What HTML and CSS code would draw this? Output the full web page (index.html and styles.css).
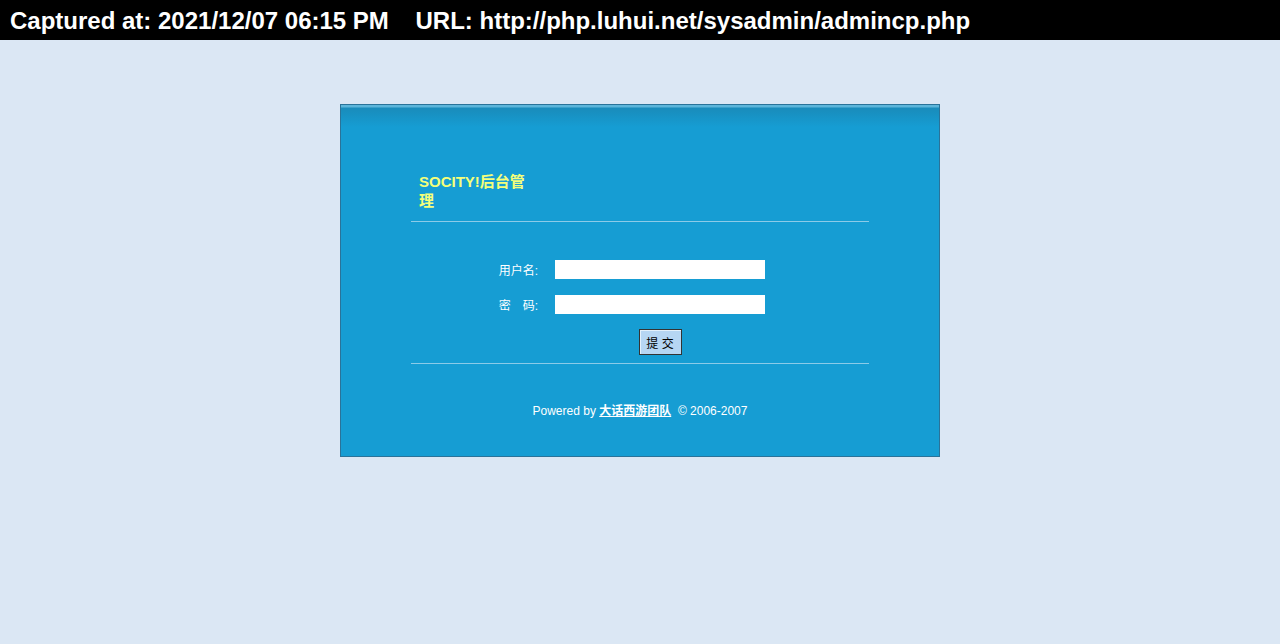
FILE: index.html
```html
<!DOCTYPE html>
<html>
<head>
<meta charset="utf-8">
<title>SOCITY!后台管理</title>
<link rel="stylesheet" href="styles.css">
</head>
<body>
<div class="capbar">Captured at: 2021/12/07 06:15 PM&nbsp;&nbsp;&nbsp;&nbsp;URL: http://php.luhui.net/sysadmin/admincp.php</div>
<div class="box">
  <div class="box-top"></div>
  <div class="inner">
    <div class="title">SOCITY!后台管理</div>
    <div class="rule"></div>
    <form class="form">
      <label class="lbl">用户名:</label>
      <input class="field" type="text">
      <label class="lbl">密　码:</label>
      <input class="field" type="password">
      <span></span>
      <div class="btnwrap"><button class="btn" type="button">提 交</button></div>
    </form>
    <div class="rule rule2"></div>
    <div class="footer">Powered by <a href="#" class="team">大话西游团队</a>&nbsp;&nbsp;© 2006-2007</div>
  </div>
</div>
</body>
</html>
```
FILE: styles.css
```css
html, body {
  margin: 0;
  padding: 0;
  background: #dbe7f4;
  font-family: "Liberation Sans", Arial, "Noto Sans CJK SC", sans-serif;
}
.capbar {
  height: 40px;
  background: #000;
  color: #fff;
  font-size: 24px;
  font-weight: bold;
  line-height: 42px;
  padding-left: 10px;
  white-space: nowrap;
}
.box {
  width: 598px;
  height: 351px;
  margin: 64px auto 0;
  border: 1px solid #2a7399;
  background: #169dd3;
  display: flex;
  flex-direction: column;
}
.box-top {
  height: 22px;
  flex: none;
  background: linear-gradient(#5cb5da 0, #5cb5da 2px, #1a8cbb 3px, #1890c1 8px, #169dd3 22px);
}
.inner {
  width: 458px;
  margin: 0 auto;
  display: flex;
  flex-direction: column;
}
.title {
  margin-top: 45px;
  margin-left: 8px;
  width: 118px;
  color: #f4ff7a;
  font-size: 15px;
  font-weight: bold;
  line-height: 19px;
}
.rule {
  height: 1px;
  background: #8ccbe8;
  margin-top: 11px;
}
.form {
  margin: 38px 0 0;
  display: grid;
  grid-template-columns: 127px 210px;
  column-gap: 17px;
  row-gap: 16px;
  align-items: center;
}
.lbl {
  text-align: right;
  color: #fff;
  font-size: 12px;
}
.field {
  width: 210px;
  height: 19px;
  box-sizing: border-box;
  border: none;
  background: #fff;
  margin: 0;
  padding: 0;
}
.btnwrap {
  display: flex;
  justify-content: center;
  margin-top: -1px;
}
.btn {
  width: 43px;
  height: 26px;
  box-sizing: border-box;
  border: 1px solid #333;
  box-shadow: inset 1px 1px 0 #e4f1fc;
  background: #b6d6f3;
  color: #000;
  font-size: 12px;
  font-family: "Liberation Sans", Arial, "Noto Sans CJK SC", sans-serif;
  padding: 0;
}
.rule2 {
  margin-top: 8px;
}
.footer {
  margin-top: 37px;
  text-align: center;
  color: #fff;
  font-size: 12px;
}
.team {
  color: #fff;
  font-weight: bold;
  text-decoration: underline;
}
```
